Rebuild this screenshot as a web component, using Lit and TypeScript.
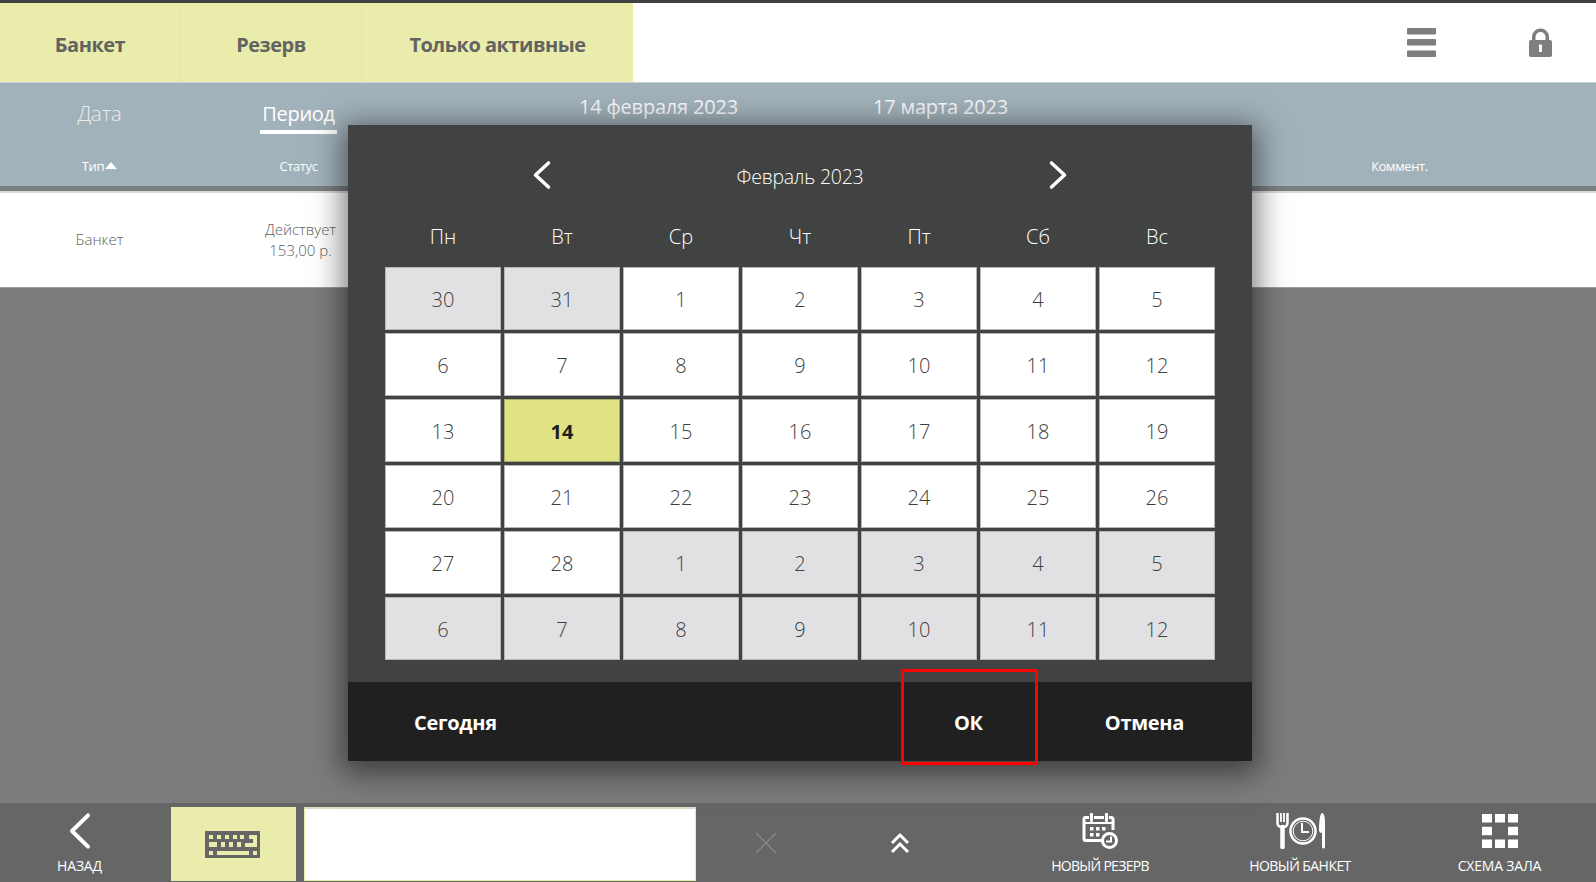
import { LitElement, html, css, svg } from "lit";
import { customElement } from "lit/decorators.js";

const WEEK = ["Пн", "Вт", "Ср", "Чт", "Пт", "Сб", "Вс"];
type Day = { n: number; muted?: boolean; sel?: boolean };
const prev = [30, 31].map((n) => ({ n, muted: true }));
const cur: Day[] = Array.from({ length: 28 }, (_, i) => ({ n: i + 1, sel: i + 1 === 14 }));
const next = Array.from({ length: 12 }, (_, i) => ({ n: i + 1, muted: true }));
const DAYS: Day[] = [...prev, ...cur, ...next];

const chevron = (dir: "l" | "r", w: number, h: number, sw: number) => svg`
  <svg width=${w} height=${h} viewBox="0 0 ${w} ${h}" fill="none">
    <path d=${dir === "l"
      ? `M${w - sw} ${sw / 1.2} L${sw} ${h / 2} L${w - sw} ${h - sw / 1.2}`
      : `M${sw} ${sw / 1.2} L${w - sw} ${h / 2} L${sw} ${h - sw / 1.2}`}
      stroke="#fff" stroke-width=${sw} stroke-linecap="round" stroke-linejoin="round"/>
  </svg>`;

@customElement("app-root")
export class AppRoot extends LitElement {
  static styles = css`
    :host {
      display: block;
      position: relative;
      width: 1596px;
      height: 882px;
      overflow: hidden;
      font-family: "Open Sans", "Noto Sans", sans-serif;
      background: #7b7c7b;
    }
    .page { display: flex; flex-direction: column; height: 882px; }
    .topline { height: 3px; background: #404241; flex: none; }
    .header { height: 79px; flex: none; display: flex; background: #fff; border-bottom: 1px solid #c9d0d3; }
    .tabs { display: flex; width: 633px; background: #e9ecab; }
    .tab {
      display: flex; align-items: center; justify-content: center;
      font-size: 20px; font-weight: 700; color: #636462; letter-spacing: -0.5px;
      border-right: 1px solid #e3e7a6; padding-top: 4px; box-sizing: border-box;
    }
    .tab.a { width: 181px; }
    .tab.b { width: 181px; }
    .tab.c { flex: 1; border-right: none; }
    .tools { flex: 1; display: flex; justify-content: flex-end; align-items: center; gap: 93px; padding-right: 44px; }
    .band { height: 103px; flex: none; background: #a2b2ba; display: flex; flex-direction: column; border-bottom: 5px solid #7b7f7f; }
    .band-top { height: 65px; display: flex; }
    .mode { width: 199px; display: flex; flex-direction: column; align-items: center; padding-top: 17px; font-size: 21px; font-weight: 300; color: #e8ecee; letter-spacing: -0.3px; line-height: 27px; }
    .mode.on { color: #fff; font-weight: 400; font-size: 20px; padding-top: 16px; }
    .mode.on span { border-bottom: 4px solid #fff; padding: 0 2px 2px; line-height: 29px; }
    .dates { display: flex; margin-left: 181px; padding-top: 10px; font-size: 20px; font-weight: 400; color: #f8f9fa; letter-spacing: -0.2px; line-height: 27px; }
    .dates span:first-child { width: 294px; }
    .band-cols { height: 38px; display: flex; align-items: center; font-size: 13px; color: #fff; font-weight: 400; letter-spacing: -0.4px; padding-bottom: 2px; box-sizing: border-box; }
    .col-a { width: 199px; text-align: center; }
    .col-b { width: 199px; text-align: center; }
    .col-c { margin-left: 860px; width: 283px; text-align: center; }
    .tri { display: inline-block; width: 0; height: 0; border-left: 6px solid transparent; border-right: 6px solid transparent; border-bottom: 7px solid #fff; margin-left: 1px; vertical-align: 2px; }
    .row { height: 97px; flex: none; background: #fff; display: flex; align-items: center; font-size: 15px; font-weight: 300; color: #5e5f5e; border-top: 2px solid #d9dbdb; border-bottom: 1px solid #9c9d9c; box-sizing: border-box; padding-bottom: 1px; }
    .row div { width: 199px; text-align: center; line-height: 21px; }
    .row div + div { padding-left: 4px; box-sizing: border-box; }
    .fill { flex: 1; }
    .bottom { height: 79px; flex: none; background: #666; display: flex; align-items: stretch; font-size: 14px; color: #fff; font-weight: 400; }
    .navbtn { display: flex; flex-direction: column; align-items: center; justify-content: flex-end; padding-bottom: 7px; letter-spacing: -0.2px; box-sizing: border-box; }
    .navbtn svg { display: block; }
    .navbtn span { line-height: 19px; margin-top: 7px; }
    .back { width: 159px; }
    .back span { margin-top: 6px; }
    .kbd { width: 125px; margin: 4px 0 1px 12px; background: #e9ecab; display: flex; align-items: center; justify-content: center; padding-right: 2px; box-sizing: border-box; }
    .input { width: 392px; margin: 4px 0 1px 8px; background: #fff; border: 1px solid #e9ecab; border-top: 2px solid #d8ddc4; box-sizing: border-box; }
    .clear { width: 140px; display: flex; align-items: center; justify-content: center; }
    .up { width: 128px; display: flex; align-items: center; justify-content: center; }
    .nr { width: 200px; margin-left: 36px; letter-spacing: -0.7px; }
    .nb { width: 200px; letter-spacing: -0.55px; }
    .sh { width: 196px; padding-left: 3px; }
    .sh span { margin-top: 8px; }

    .modal {
      position: absolute; left: 348px; top: 125px; width: 904px; height: 636px;
      background: #414342; box-shadow: 0 6px 28px 6px rgba(0,0,0,.5);
      display: flex; flex-direction: column;
    }
    .m-head { height: 102px; display: flex; align-items: center; justify-content: center; padding-bottom: 2px; box-sizing: border-box; flex: none; }
    .m-title { width: 496px; text-align: center; font-size: 19.500px; font-weight: 300; color: #fff; letter-spacing: -0.25px; padding-top: 2px; }
    .week { display: grid; grid-template-columns: repeat(7, 116px); column-gap: 3px; padding: 0 37px; height: 40px; flex: none; color: #fff; font-size: 20px; font-weight: 300; text-align: center; line-height: 20px; }
    .grid { display: grid; grid-template-columns: repeat(7, 116px); grid-auto-rows: 63px; gap: 3px; padding: 0 37px; flex: none; }
    .cell { background: #fff; box-shadow: inset 0 0 0 1px #b5b6b6; display: flex; align-items: center; justify-content: center; font-size: 20px; font-weight: 300; color: #3e4040; padding-top: 2px; box-sizing: border-box; }
    .cell.muted { background: #e1e1e3; }
    .cell.sel { background: #e0e384; font-weight: 700; color: #1d1f1f; box-shadow: inset 0 0 0 1px #a9ab6b; }
    .m-foot { margin-top: auto; height: 79px; flex: none; background: #202020; display: flex; align-items: center; color: #fff; font-size: 20px; font-weight: 700; letter-spacing: -0.3px; padding-top: 2px; box-sizing: border-box; }
    .m-foot .today { margin-left: 66px; }
    .m-foot .ok { margin-left: 455px; width: 33px; text-align: center; }
    .m-foot .cancel { margin-left: 120px; }
    .hl { position: absolute; left: 901px; top: 669px; width: 137px; height: 96px; box-sizing: border-box; border: 3px solid #f00; }
  `;

  render() {
    return html`
      <div class="page">
        <div class="topline"></div>
        <div class="header">
          <div class="tabs">
            <div class="tab a">Банкет</div>
            <div class="tab b">Резерв</div>
            <div class="tab c">Только активные</div>
          </div>
          <div class="tools">
            <svg width="29" height="29" viewBox="0 0 29 29"><g fill="#7e7e7e"><rect y="0" width="29" height="6.500" rx="1"/><rect y="11" width="29" height="6.500" rx="1"/><rect y="22.500" width="29" height="6.500" rx="1"/></g></svg>
            <svg width="23" height="29" viewBox="0 0 23 29"><path fill="#7e7e7e" fill-rule="evenodd" d="M3 12V9a8.500 8.500 0 0 1 17 0v3h1a2 2 0 0 1 2 2v13a2 2 0 0 1-2 2H2a2 2 0 0 1-2-2V14a2 2 0 0 1 2-2zM6.500 12h10V9a5 5 0 0 0-10 0zM9.800 18a1.700 1.700 0 1 1 3 1.100L13 24h-3l.2-4.900a1.700 1.700 0 0 1-.4-1.100z"/></svg>
          </div>
        </div>
        <div class="band">
          <div class="band-top">
            <div class="mode">Дата</div>
            <div class="mode on"><span>Период</span></div>
            <div class="dates"><span>14 февраля 2023</span><span>17 марта 2023</span></div>
          </div>
          <div class="band-cols">
            <div class="col-a">Тип<i class="tri"></i></div>
            <div class="col-b">Статус</div>
            <div class="col-c">Коммент.</div>
          </div>
        </div>
        <div class="row">
          <div>Банкет</div>
          <div>Действует<br />153,00 р.</div>
        </div>
        <div class="fill"></div>
        <div class="bottom">
          <div class="navbtn back">
            ${chevron("l", 24, 38, 4)}
            <span>НАЗАД</span>
          </div>
          <div class="kbd">
            <svg width="55" height="27" viewBox="0 0 55 27"><path fill="#666" fill-rule="evenodd" d="M0 0h55v27H0zM4 4v4h4V4zm8 0v4h4V4zm8 0v4h4V4zm8 0v4h4V4zm7 0v4h4V4zm9 0v4h4v4H40v4h12V4zM4 11v5h8v-5zm12 0v5h4v-5zm8 0v5h4v-5zm8 0v5h4v-5zM4 20v4h4v-4zm8 0v4h32v-4zm36 0v4h4v-4z"/></svg>
          </div>
          <div class="input"></div>
          <div class="clear">
            <svg width="22" height="22" viewBox="0 0 22 22"><path d="M1 1 21 21M21 1 1 21" stroke="#8d8d8d" stroke-width="1.200" fill="none"/></svg>
          </div>
          <div class="up">
            <svg width="20" height="22" viewBox="0 0 20 22" fill="none"><path d="M2 11 10 3 18 11M2 20 10 12 18 20" stroke="#fff" stroke-width="3"/></svg>
          </div>
          <div class="navbtn nr">
            <svg width="36" height="36" viewBox="0 0 36 36" fill="none">
              <path d="M7 4.500H3.500A1.500 1.500 0 0 0 2 6v20a1.500 1.500 0 0 0 1.500 1.500H20M12 4.500h10M27 4.500h2.500A1.500 1.500 0 0 1 31 6v11" stroke="#fff" stroke-width="3"/>
              <path d="M3 10H30" stroke="#fff" stroke-width="2"/>
              <path d="M9.500 1v6.500M24.500 1v6.500" stroke="#fff" stroke-width="3" stroke-linecap="round"/>
              <g fill="#fff"><rect x="8" y="14" width="3.500" height="3.500"/><rect x="14" y="14" width="3.500" height="3.500"/><rect x="20" y="14" width="3.500" height="3.500"/><rect x="8" y="20" width="3.500" height="3.500"/><rect x="14" y="20" width="3.500" height="3.500"/></g>
              <circle cx="27.500" cy="27.500" r="7" stroke="#fff" stroke-width="3"/>
              <path d="M29 23.500v5h-5" stroke="#fff" stroke-width="2"/>
            </svg>
            <span>НОВЫЙ РЕЗЕРВ</span>
          </div>
          <div class="navbtn nb">
            <svg width="49" height="36" viewBox="0 0 49 36" fill="none">
              <path d="M1.500 0v10a4 4 0 0 0 4 4h2a4 4 0 0 0 4-4V0" stroke="#fff" stroke-width="2.500"/>
              <path d="M5 0v9M8 0v9" stroke="#fff" stroke-width="1.800"/>
              <path d="M6.500 14v20" stroke="#fff" stroke-width="4.500" stroke-linecap="round"/>
              <circle cx="27" cy="18" r="12.500" stroke="#fff" stroke-width="2.500"/>
              <circle cx="27" cy="18" r="9.800" stroke="#fff" stroke-width="1"/>
              <path d="M26 10v9h7" stroke="#fff" stroke-width="2"/>
              <path fill="#fff" d="M46 0c2 0 3 4 3 10v24a1.500 1.500 0 0 1-3 0V20c-2 0-3-1-3-3C43 9 44 0 46 0z"/>
            </svg>
            <span>НОВЫЙ БАНКЕТ</span>
          </div>
          <div class="navbtn sh">
            <svg width="36" height="34" viewBox="0 0 36 34"><g fill="#fff"><rect x="0" y="0" width="10" height="8.500"/><rect x="13" y="0" width="10" height="8.500"/><rect x="26" y="0" width="10" height="8.500"/><rect x="0" y="12.750" width="10" height="8.500"/><rect x="26" y="12.750" width="10" height="8.500"/><rect x="0" y="25.500" width="10" height="8.500"/><rect x="13" y="25.500" width="10" height="8.500"/><rect x="26" y="25.500" width="10" height="8.500"/></g></svg>
            <span>СХЕМА ЗАЛА</span>
          </div>
        </div>
      </div>

      <div class="modal">
        <div class="m-head">
          ${chevron("l", 20, 30, 3.5)}
          <div class="m-title">Февраль 2023</div>
          ${chevron("r", 20, 30, 3.5)}
        </div>
        <div class="week">${WEEK.map((d) => html`<div>${d}</div>`)}</div>
        <div class="grid">
          ${DAYS.map((d) => html`<div class="cell ${d.muted ? "muted" : ""} ${d.sel ? "sel" : ""}">${d.n}</div>`)}
        </div>
        <div class="m-foot">
          <span class="today">Сегодня</span>
          <span class="ok">ОК</span>
          <span class="cancel">Отмена</span>
        </div>
      </div>
      <div class="hl"></div>
    `;
  }
}
